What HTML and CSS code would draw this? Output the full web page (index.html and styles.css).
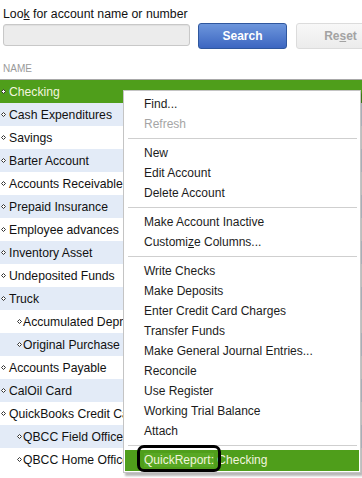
FILE: index.html
```html
<!DOCTYPE html>
<html lang="en">
  <head>
    <meta charset="UTF-8" />
    <title>Chart of Accounts</title>
    <link rel="stylesheet" href="styles.css">
  </head>
  <body>
    <!-- 搜索区 -->
    <div class="search">
      <div class="search-label">Loo<u>k</u> for account name or number</div>
      <div class="search-row">
        <div class="search-input"></div>
        <a class="btn btn-search" href="javascript:;">Search</a>
        <a class="btn btn-reset" href="javascript:;">Re<u>s</u>et</a>
      </div>
    </div>

    <div class="col-head">NAME</div>

    <!-- 科目列表 -->
    <ul class="accounts">
      <li class="selected"><svg class="dot" viewBox="0 0 5 5"><path d="M2.5 .5 4.5 2.5 2.5 4.5 .5 2.5z" /></svg>Checking</li>
      <li><svg class="dot" viewBox="0 0 5 5"><path d="M2.5 .5 4.5 2.5 2.5 4.5 .5 2.5z" /></svg>Cash Expenditures</li>
      <li><svg class="dot" viewBox="0 0 5 5"><path d="M2.5 .5 4.5 2.5 2.5 4.5 .5 2.5z" /></svg>Savings</li>
      <li><svg class="dot" viewBox="0 0 5 5"><path d="M2.5 .5 4.5 2.5 2.5 4.5 .5 2.5z" /></svg>Barter Account</li>
      <li><svg class="dot" viewBox="0 0 5 5"><path d="M2.5 .5 4.5 2.5 2.5 4.5 .5 2.5z" /></svg>Accounts Receivable</li>
      <li><svg class="dot" viewBox="0 0 5 5"><path d="M2.5 .5 4.5 2.5 2.5 4.5 .5 2.5z" /></svg>Prepaid Insurance</li>
      <li><svg class="dot" viewBox="0 0 5 5"><path d="M2.5 .5 4.5 2.5 2.5 4.5 .5 2.5z" /></svg>Employee advances</li>
      <li><svg class="dot" viewBox="0 0 5 5"><path d="M2.5 .5 4.5 2.5 2.5 4.5 .5 2.5z" /></svg>Inventory Asset</li>
      <li><svg class="dot" viewBox="0 0 5 5"><path d="M2.5 .5 4.5 2.5 2.5 4.5 .5 2.5z" /></svg>Undeposited Funds</li>
      <li><svg class="dot" viewBox="0 0 5 5"><path d="M2.5 .5 4.5 2.5 2.5 4.5 .5 2.5z" /></svg>Truck</li>
      <li class="sub"><svg class="dot" viewBox="0 0 5 5"><path d="M2.5 .5 4.5 2.5 2.5 4.5 .5 2.5z" /></svg>Accumulated Depreciation</li>
      <li class="sub"><svg class="dot" viewBox="0 0 5 5"><path d="M2.5 .5 4.5 2.5 2.5 4.5 .5 2.5z" /></svg>Original Purchase</li>
      <li><svg class="dot" viewBox="0 0 5 5"><path d="M2.5 .5 4.5 2.5 2.5 4.5 .5 2.5z" /></svg>Accounts Payable</li>
      <li><svg class="dot" viewBox="0 0 5 5"><path d="M2.5 .5 4.5 2.5 2.5 4.5 .5 2.5z" /></svg>CalOil Card</li>
      <li><svg class="dot" viewBox="0 0 5 5"><path d="M2.5 .5 4.5 2.5 2.5 4.5 .5 2.5z" /></svg>QuickBooks Credit Card</li>
      <li class="sub"><svg class="dot" viewBox="0 0 5 5"><path d="M2.5 .5 4.5 2.5 2.5 4.5 .5 2.5z" /></svg>QBCC Field Office</li>
      <li class="sub"><svg class="dot" viewBox="0 0 5 5"><path d="M2.5 .5 4.5 2.5 2.5 4.5 .5 2.5z" /></svg>QBCC Home Office</li>
    </ul>

    <!-- 右键菜单 -->
    <ul class="menu">
      <li>Find...</li>
      <li class="disabled">Refresh</li>
      <li class="sep"></li>
      <li>New</li>
      <li>Edit Account</li>
      <li>Delete Account</li>
      <li class="sep"></li>
      <li>Make Account Inactive</li>
      <li>Customi<u>z</u>e Columns...</li>
      <li class="sep"></li>
      <li>Write Checks</li>
      <li>Make Deposits</li>
      <li>Enter Credit Card Charges</li>
      <li>Transfer Funds</li>
      <li>Make General Journal Entries...</li>
      <li>Reconcile</li>
      <li>Use Register</li>
      <li>Working Trial Balance</li>
      <li>Attach</li>
      <li class="sep"></li>
      <li class="active"><span class="callout">QuickReport:</span> Checking</li>
    </ul>
  </body>
</html>
```

FILE: styles.css
```css
* {
  margin: 0;
  padding: 0;
  box-sizing: border-box;
}
body {
  width: 362px;
  height: 478px;
  overflow: hidden;
  position: relative;
  font: 12px "Liberation Sans", Arial, sans-serif;
  color: #111;
  background-color: #fff;
}
ul {
  list-style: none;
}
/* 
  搜索区
*/
.search {
  padding: 7px 0 0 3px;
}
.search-label {
  font-size: 12.3px;
  line-height: 14px;
}
.search-row {
  display: flex;
  margin-top: 2px;
  overflow: hidden;
}
.search-input {
  flex-shrink: 0;
  width: 187px;
  height: 22px;
  margin-top: 1px;
  border: 1px solid #c8c8c8;
  border-radius: 3px;
  background-color: #ececec;
  box-shadow: inset 0 1px 1px rgba(0, 0, 0, 0.06);
}
.btn {
  flex-shrink: 0;
  width: 89px;
  height: 26px;
  display: flex;
  align-items: center;
  justify-content: center;
  border-radius: 3px;
  font-weight: bold;
  text-decoration: none;
}
.btn-search {
  margin-left: 8px;
  color: #fff;
  border: 1px solid #2f579e;
  background: linear-gradient(#6d96dc, #3c66c1);
}
.btn-reset {
  margin-left: 9px;
  color: #a3a3a3;
  border: 1px solid #dcdcdc;
  background: linear-gradient(#f8f8f8, #ececec);
}
.col-head {
  margin-top: 14px;
  padding: 0 0 4px 3px;
  font-size: 10px;
  line-height: 12px;
  color: #9a9a9a;
}
/* 
  科目列表
*/
.accounts {
  border-top: 1px solid #a8a8a8;
}
.accounts li {
  height: 23px;
  display: flex;
  align-items: center;
  padding-left: 1px;
  font-size: 12.2px;
  white-space: nowrap;
  overflow: hidden;
}
.accounts li:nth-child(even) {
  background-color: #e3ebf7;
}
.accounts .sub {
  padding-left: 17px;
}
.accounts .selected {
  background-color: #4f9e1b;
  color: #f2f5de;
}
.dot {
  flex-shrink: 0;
  width: 5px;
  height: 5px;
  margin-right: 3px;
  fill: #fff;
  stroke: #333;
  stroke-width: 1;
}
.sub .dot {
  margin-right: 1px;
}
/* 
  右键菜单
*/
.menu {
  position: absolute;
  left: 123px;
  top: 90px;
  width: 238px;
  padding: 3px 1px 1px;
  background-color: #fff;
  border: 1px solid #c4c4c4;
  box-shadow: 2px 3px 2px rgba(0, 0, 0, 0.28);
}
.menu li {
  height: 20px;
  line-height: 20px;
  padding-left: 19px;
  color: #1c1c1c;
  white-space: nowrap;
}
.menu .disabled {
  color: #a5a5a5;
}
.menu .sep {
  height: 1px;
  margin: 4px 2px 4px 3px;
  padding: 0;
  background-color: #cfcfcf;
}
.menu .active {
  height: 21px;
  line-height: 21px;
  background-color: #4f9e1b;
  color: #f2f5de;
}
.callout {
  position: relative;
  display: inline-block;
  line-height: 14px;
  background-color: #58a824;
}
.callout::before {
  content: "";
  position: absolute;
  left: -7px;
  right: -7px;
  top: -8px;
  bottom: -5px;
  border: 3px solid #000;
  border-radius: 7px;
}
```
